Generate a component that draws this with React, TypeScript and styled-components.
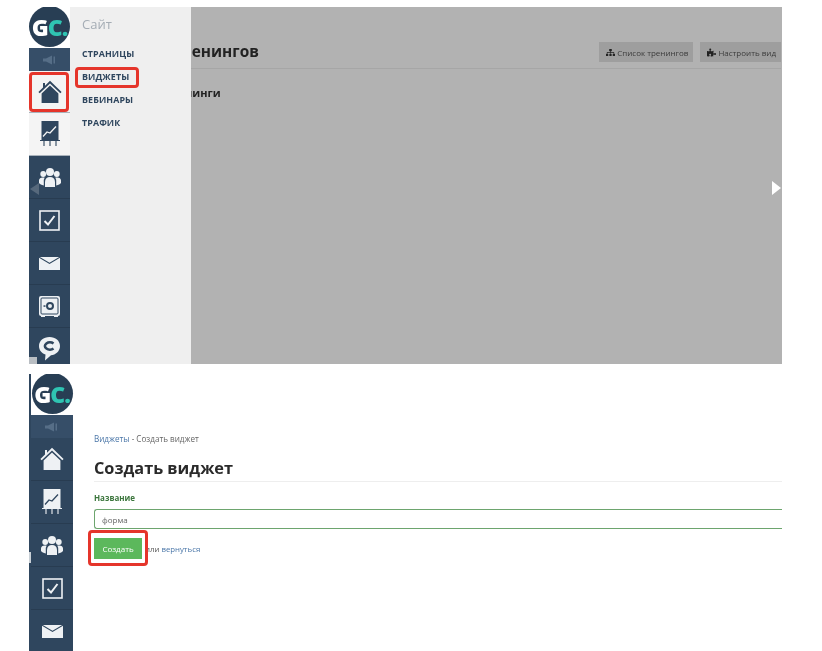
import React from "react";
import styled, { createGlobalStyle } from "styled-components";
import { FaPuzzlePiece, FaSitemap } from "react-icons/fa";

const GlobalStyle = createGlobalStyle`
  html, body {
    margin: 0;
    padding: 0;
    background: #fff;
    overflow: hidden;
  }
  body {
    font-family: "Open Sans", "Liberation Sans", sans-serif;
  }
`;

const NAVY = "#2f465e";

const Page = styled.div`
  width: 822px;
  height: 651px;
  box-sizing: border-box;
  padding: 7px 0 0 29px;
  display: flex;
  flex-direction: column;
  gap: 10px;
  overflow: hidden;
`;

const Shot = styled.section<{ $height: number; $muted?: boolean }>`
  position: relative;
  width: 753px;
  height: ${(p) => p.$height}px;
  flex: none;
  display: flex;
  overflow: hidden;
  background: ${(p) => (p.$muted ? "#b2b2b2" : "#fff")};
  filter: blur(0.4px);
`;

const Rail = styled.nav<{ $width: number; $strip?: boolean }>`
  width: ${(p) => p.$width}px;
  flex: none;
  display: flex;
  flex-direction: column;
  box-sizing: content-box;
  border-left: ${(p) => (p.$strip ? `2px solid ${NAVY}` : "none")};
`;

const LogoBox = styled.div`
  height: 41px;
  flex: none;
  background: #fff;
  display: flex;
  justify-content: center;
`;

const LogoMark = styled.div`
  width: 41px;
  height: 41px;
  margin-top: -1px;
  border-radius: 50%;
  background: #283e54;
  color: #fff;
  display: flex;
  align-items: center;
  justify-content: center;
  font-family: "Open Sans", sans-serif;
  font-size: 23px;
  font-weight: 800;
  letter-spacing: -1px;
  & > span {
    color: #2fc4b2;
  }
`;

const SpeakerRow = styled.div`
  height: 23px;
  flex: none;
  background: #364e68;
  color: #566e87;
  display: flex;
  align-items: center;
  justify-content: center;
`;

const RailItem = styled.div<{ $light?: boolean; $height?: number; $drop?: number }>`
  height: ${(p) => p.$height ?? 43}px;
  flex: none;
  box-sizing: border-box;
  padding-top: ${(p) => p.$drop ?? 0}px;
  display: flex;
  align-items: center;
  justify-content: center;
  overflow: hidden;
  background: ${(p) => (p.$light ? "#f4f4f4" : NAVY)};
  color: ${(p) => (p.$light ? NAVY : "#eef1f4")};
  border-bottom: 1px solid ${(p) => (p.$light ? "#a9b2bb" : "#283c51")};
`;

const Flyout = styled.aside`
  width: 121px;
  flex: none;
  background: #efefef;
  box-sizing: border-box;
  padding: 10px 0 0 12px;
`;

const FlyoutTitle = styled.div`
  font-size: 13px;
  line-height: 14px;
  color: #a5adb5;
  margin-bottom: 17px;
`;

const FlyoutLink = styled.div`
  font-size: 8.9px;
  line-height: 12px;
  font-weight: 700;
  color: #2f465e;
  margin-bottom: 11px;
  letter-spacing: 0.1px;
`;

const DimMain = styled.main`
  flex: 1;
  min-width: 0;
  box-sizing: border-box;
  padding: 35px 1px 0 0;
  overflow: hidden;
`;

const DimHeader = styled.header`
  height: 26px;
  display: flex;
  justify-content: space-between;
  align-items: flex-start;
  border-bottom: 1px solid #a6a6a6;
`;

const DimTitle = styled.h1`
  margin: 0 0 0 -9px;
  font-size: 15.4px;
  line-height: 20px;
  font-weight: 700;
  color: #222;
`;

const DimActions = styled.div`
  display: flex;
  gap: 7px;
`;

const DimButton = styled.div`
  height: 20px;
  padding: 0 5px 0 7px;
  box-sizing: border-box;
  display: flex;
  align-items: center;
  gap: 2px;
  background: #9e9e9e;
  color: #3b3b3b;
  font-size: 8px;
  white-space: nowrap;
`;

const DimSubtitle = styled.h2`
  margin: 17px 0 0 -6px;
  font-size: 11px;
  line-height: 14px;
  font-weight: 700;
  color: #222;
`;

const NextArrow = styled.div`
  position: absolute;
  right: 1px;
  top: 174px;
  width: 0;
  height: 0;
  border-top: 7px solid transparent;
  border-bottom: 7px solid transparent;
  border-left: 9px solid #fff;
`;

const PrevArrow = styled.div`
  position: absolute;
  left: 1px;
  top: 176px;
  width: 0;
  height: 0;
  border-top: 6px solid transparent;
  border-bottom: 6px solid transparent;
  border-right: 9px solid rgba(120, 135, 150, 0.55);
`;

const Badge = styled.div`
  position: absolute;
  left: 0;
  bottom: 0;
  width: 8px;
  height: 7px;
  background: #b9bec3;
`;

const Marker = styled.div<{ $x: number; $y: number; $w: number; $h: number }>`
  position: absolute;
  left: ${(p) => p.$x}px;
  top: ${(p) => p.$y}px;
  width: ${(p) => p.$w}px;
  height: ${(p) => p.$h}px;
  box-sizing: border-box;
  border: 3px solid #e5352b;
  border-radius: 4px;
`;

const Handle = styled.div`
  position: absolute;
  left: 0;
  top: 178px;
  width: 2px;
  height: 11px;
  background: #c9d0d6;
`;

const FormMain = styled.main`
  flex: 1;
  min-width: 0;
  box-sizing: border-box;
  padding: 59px 0 0 21px;
`;

const Crumbs = styled.div`
  font-size: 8.1px;
  line-height: 12px;
  color: #666;
`;

const CrumbLink = styled.span`
  color: #4a76a8;
`;

const FormTitle = styled.h1`
  margin: 13px 0 0;
  padding-bottom: 3px;
  font-size: 16.3px;
  line-height: 20px;
  font-weight: 700;
  color: #2a2a2a;
  border-bottom: 1px solid #eee;
`;

const FieldLabel = styled.label`
  display: block;
  margin-top: 11px;
  font-size: 8px;
  line-height: 10px;
  font-weight: 700;
  color: #3c763d;
`;

const NameInput = styled.div`
  margin-top: 6px;
  height: 20px;
  box-sizing: border-box;
  padding-left: 7px;
  display: flex;
  align-items: center;
  border: 1px solid #6da56e;
  border-right: none;
  border-radius: 3px 0 0 3px;
  font-size: 8px;
  color: #666;
`;

const FormActions = styled.div`
  margin-top: 9px;
  display: flex;
  align-items: center;
  gap: 3px;
  font-size: 7.8px;
  color: #555;
`;

const CreateButton = styled.div`
  width: 48px;
  height: 21px;
  display: flex;
  align-items: center;
  justify-content: center;
  background: #5cb85c;
  color: #fff;
  font-size: 8px;
`;

const Speaker = () => (
  <svg width="14" height="10" viewBox="0 0 14 10" fill="currentColor">
    <rect x="0" y="3.5" width="3" height="3" />
    <path d="M3 3.5 9 .5v9L3 6.5z" />
    <rect x="10.5" y="1.5" width="1.5" height="7" />
  </svg>
);

const HomeIcon = ({ size = 24 }: { size?: number }) => (
  <svg width={size} height={size} viewBox="0 0 24 24" fill="currentColor">
    <path d="M12 .8 23.6 12l-1.3 1.3L12 3.6 1.7 13.3.4 12 5 7.6V3h2v2.7z" />
    <path d="M12 5.6 20.4 13.4V23H3.6v-9.6z" />
  </svg>
);

// the chart line takes the colour of the row behind the icon
const TrendIcon = ({ line }: { line: string }) => (
  <svg width="20" height="26" viewBox="0 0 20 26" fill="none">
    <rect x="1.5" y="0" width="17" height="19" fill="currentColor" />
    <path d="M3 15.5 7 11l3 1 6-6.5" stroke={line} strokeWidth="1.3" />
    <path d="M0 19.5h20M4 20v5M10 20v5M16 20v5" stroke="currentColor" strokeWidth="1.1" />
  </svg>
);

const UsersIcon = () => (
  <svg width="22" height="19" viewBox="0 0 22 19" fill="currentColor">
    <circle cx="11" cy="4" r="4" />
    <circle cx="4.2" cy="6" r="2.9" />
    <circle cx="17.8" cy="6" r="2.9" />
    <path d="M6 19v-5c0-3.2 2-5 5-5s5 1.8 5 5v5z" />
    <path d="M0 15v-2.5C0 10.5 1.6 9.4 3.8 9.4c.8 0 1.4.1 2 .4C4.6 11 4.8 12.5 4.8 14v3.5C2.5 17 .8 16.2 0 15z" />
    <path d="M22 15v-2.5c0-2-1.6-3.1-3.8-3.1-.8 0-1.4.1-2 .4 1.2 1.2 1 2.7 1 4.2v3.5C19.5 17 21.2 16.2 22 15z" />
  </svg>
);

const CheckIcon = () => (
  <svg width="21" height="21" viewBox="0 0 21 21" fill="none" stroke="currentColor">
    <rect x="1" y="1" width="19" height="19" strokeWidth="1.6" />
    <path d="M5.5 11 9 14.5 15.5 6" strokeWidth="2" />
  </svg>
);

const MailIcon = () => (
  <svg width="21" height="13" viewBox="0 0 21 13" fill="currentColor">
    <path d="M0 .8 10.5 7 21 .8V13H0z" />
    <path d="M.8 0h19.4L10.5 5.7z" />
  </svg>
);

const SafeIcon = () => (
  <svg width="21" height="21" viewBox="0 0 21 21" fill="none">
    <rect x="0" y="0" width="21" height="20" rx="2" fill="currentColor" />
    <rect x="2" y="2" width="17" height="16" rx="1" fill="none" stroke={NAVY} strokeWidth="1" />
    <circle cx="11" cy="10" r="3" stroke={NAVY} strokeWidth="2" />
    <rect x="4.5" y="9.3" width="2" height="1.5" fill={NAVY} />
    <rect x="2" y="19.5" width="4" height="1.5" fill="currentColor" />
    <rect x="15" y="19.5" width="4" height="1.5" fill="currentColor" />
  </svg>
);

const ChatIcon = () => (
  <svg width="21" height="24" viewBox="0 0 21 24" fill="currentColor">
    <path d="M10.5 0C16.5 0 21 3.8 21 9s-4.5 9-9 9.3L6 23.5 6.5 17.5C2.5 16.3 0 13 0 9 0 3.8 4.5 0 10.5 0z" />
    <path d="M14.5 6.5A5 3.6 0 1 0 14.5 11.5" fill="none" stroke={NAVY} strokeWidth="2.6" />
  </svg>
);

const Logo = () => (
  <LogoBox>
    <LogoMark>
      G<span>C.</span>
    </LogoMark>
  </LogoBox>
);

export default function App() {
  return (
    <>
      <GlobalStyle />
      <Page>
        <Shot $height={357} $muted>
          <Rail $width={41}>
            <Logo />
            <SpeakerRow>
              <Speaker />
            </SpeakerRow>
            <RailItem $light $height={42}>
              <HomeIcon />
            </RailItem>
            <RailItem $light>
              <TrendIcon line="#f4f4f4" />
            </RailItem>
            <RailItem>
              <UsersIcon />
            </RailItem>
            <RailItem>
              <CheckIcon />
            </RailItem>
            <RailItem>
              <MailIcon />
            </RailItem>
            <RailItem>
              <SafeIcon />
            </RailItem>
            <RailItem $height={37} $drop={6}>
              <ChatIcon />
            </RailItem>
          </Rail>
          <Flyout>
            <FlyoutTitle>Сайт</FlyoutTitle>
            <FlyoutLink>СТРАНИЦЫ</FlyoutLink>
            <FlyoutLink>ВИДЖЕТЫ</FlyoutLink>
            <FlyoutLink>ВЕБИНАРЫ</FlyoutLink>
            <FlyoutLink>ТРАФИК</FlyoutLink>
          </Flyout>
          <DimMain>
            <DimHeader>
              <DimTitle>ренингов</DimTitle>
              <DimActions>
                <DimButton>
                  <FaSitemap size={9} color="#222" />
                  Список тренингов
                </DimButton>
                <DimButton>
                  <FaPuzzlePiece size={9} color="#222" />
                  Настроить вид
                </DimButton>
              </DimActions>
            </DimHeader>
            <DimSubtitle>нинги</DimSubtitle>
          </DimMain>
          <PrevArrow />
          <NextArrow />
          <Badge />
          <Marker $x={0} $y={65} $w={40} $h={40} />
          <Marker $x={46} $y={60} $w={64} $h={21} />
        </Shot>
        <Shot $height={277}>
          <Rail $width={42} $strip>
            <Logo />
            <SpeakerRow>
              <Speaker />
            </SpeakerRow>
            <RailItem>
              <HomeIcon />
            </RailItem>
            <RailItem>
              <TrendIcon line={NAVY} />
            </RailItem>
            <RailItem>
              <UsersIcon />
            </RailItem>
            <RailItem>
              <CheckIcon />
            </RailItem>
            <RailItem>
              <MailIcon />
            </RailItem>
          </Rail>
          <FormMain>
            <Crumbs>
              <CrumbLink>Виджеты</CrumbLink> - Создать виджет
            </Crumbs>
            <FormTitle>Создать виджет</FormTitle>
            <FieldLabel>Название</FieldLabel>
            <NameInput>форма</NameInput>
            <FormActions>
              <CreateButton>Создать</CreateButton>
              <span>
                или <CrumbLink>вернуться</CrumbLink>
              </span>
            </FormActions>
          </FormMain>
          <Handle />
          <Marker $x={59} $y={156} $w={60} $h={36} />
        </Shot>
      </Page>
    </>
  );
}
